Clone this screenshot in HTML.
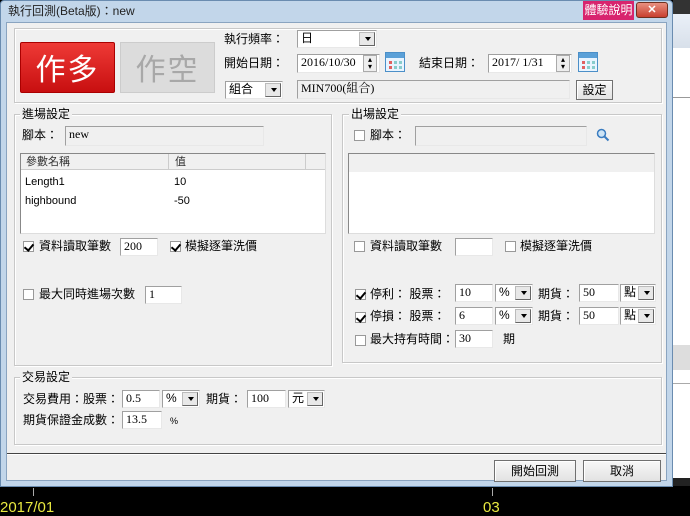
<!DOCTYPE html>
<html><head><meta charset="utf-8"><style>
*{box-sizing:border-box;margin:0;padding:0}
body{width:690px;height:508px;overflow:hidden;background:#000;position:relative;font-family:"Liberation Sans","Noto Sans CJK TC",sans-serif;font-size:12px;color:#000}
.a{position:absolute;white-space:nowrap;line-height:14px}
.box{position:absolute;border:1px solid #c8c8c8;box-shadow:inset 1px 1px 0 #fff, 1px 1px 0 #fff}
.in{position:absolute;background:#fff;border:1px solid #a0a0a0;border-right-color:#e8e8e8;border-bottom-color:#e8e8e8;font-family:"Liberation Serif","Noto Serif CJK SC",serif;font-size:12px;line-height:15px;padding-left:3px}
.dd{position:absolute;background:#fff;border:1px solid #a0a0a0;border-right-color:#e8e8e8;border-bottom-color:#e8e8e8;padding-left:3px;line-height:15px}
.dd:after{content:"";position:absolute;right:1px;top:1px;width:14px;bottom:1px;background:#e8e8e8;border:1px solid #bbb;border-right-color:#666;border-bottom-color:#666}
.dd:before{content:"";position:absolute;right:5px;top:6px;border:3px solid transparent;border-top:4px solid #000;z-index:2}
.cb{position:absolute;width:11px;height:11px;border:1px solid #999;background:#fff}
.cb.on:after{content:"";position:absolute;left:2px;top:0px;width:4px;height:7px;border:solid #000;border-width:0 2px 2px 0;transform:rotate(40deg)}
.btn{position:absolute;background:linear-gradient(#f8f8f8,#e2e2e2);border:1px solid #707070;box-shadow:inset 1px 1px 0 #fff;text-align:center}
.cal{position:absolute;width:20px;height:20px;border:1px solid #4b8fc8;background:#e8f4ff}
.cal:before{content:"";position:absolute;left:0;right:0;top:0;height:5px;background:#5aa0d8}
.cal:after{content:"";position:absolute;left:3px;top:8px;width:3px;height:3px;background:#e06060;box-shadow:5px 0 #8cc,10px 0 #8cc,0 5px #e06060,5px 5px #8cc,10px 5px #8cc}
.sp{position:absolute;width:14px;height:17px;background:#eee;border:1px solid #aaa;font-size:8px;line-height:7px;text-align:center}
</style></head><body>
<div style="position:absolute;left:673px;top:0;width:17px;height:14px;background:#333"></div>
<div style="position:absolute;left:673px;top:14px;width:17px;height:34px;background:linear-gradient(#eaf0f8,#d8e0ea)"></div>
<div style="position:absolute;left:673px;top:48px;width:17px;height:432px;background:#fff"></div>
<div style="position:absolute;left:673px;top:97px;width:17px;height:1px;background:#999"></div>
<div style="position:absolute;left:673px;top:345px;width:17px;height:25px;background:#ddd"></div>
<div style="position:absolute;left:673px;top:383px;width:17px;height:1px;background:#aaa"></div>
<div style="position:absolute;left:673px;top:478px;width:17px;height:8px;background:#222"></div>
<div class="a" style="left:0;top:500px;color:#e8e840;font-size:15px;line-height:16px">2017/01</div>
<div class="a" style="left:483px;top:500px;color:#e8e840;font-size:15px;line-height:16px">03</div>
<div style="position:absolute;left:33px;top:488px;width:1px;height:8px;background:#aaa"></div>
<div style="position:absolute;left:492px;top:488px;width:1px;height:8px;background:#aaa"></div>
<div style="position:absolute;left:0;top:0;width:673px;height:487px;background:#c2d6ea;border:1px solid #6a8cb0;border-radius:4px 4px 0 0"></div>
<div class="a" style="left:8px;top:4px;font-size:12px;color:#222">執行回測(Beta版)：new</div>
<div style="position:absolute;left:583px;top:1px;width:51px;height:19px;background:#d8246e;color:#fff;text-align:center;line-height:19px;font-size:12px">體驗說明</div>
<div style="position:absolute;left:636px;top:2px;width:32px;height:16px;background:linear-gradient(#e89080,#c84030);border:1px solid #703020;border-radius:3px;color:#fff;text-align:center;line-height:14px;font-size:11px;font-weight:bold">✕</div>
<div style="position:absolute;left:6px;top:22px;width:661px;height:459px;background:#f0f0f0;border:1px solid #8aa4c0"></div>
<div class="box" style="left:14px;top:28px;width:648px;height:75px"></div>
<div style="position:absolute;left:20px;top:42px;width:95px;height:51px;background:linear-gradient(#ee3a36,#c80f10);border:1px solid #a00;border-radius:2px;color:#fff;font-size:30px;text-align:center;line-height:49px;font-family:'Noto Sans CJK TC',sans-serif;letter-spacing:2px">作多</div>
<div style="position:absolute;left:120px;top:42px;width:95px;height:51px;background:#dcdcdc;border:1px solid #ccc;color:#a8a8a8;font-size:30px;text-align:center;line-height:49px;font-family:'Noto Sans CJK TC',sans-serif;letter-spacing:2px">作空</div>
<div class="a" style="left:224px;top:32px">執行頻率：</div>
<div class="dd" style="left:297px;top:30px;width:80px;height:18px">日</div>
<div class="a" style="left:224px;top:56px">開始日期：</div>
<div class="in" style="left:297px;top:54px;width:83px;height:19px">2016/10/30</div>
<div class="sp" style="left:363px;top:55px">▴<br>▾</div>
<div class="cal" style="left:385px;top:52px"></div>
<div class="a" style="left:419px;top:56px">結束日期：</div>
<div class="in" style="left:488px;top:54px;width:84px;height:19px">2017/ 1/31</div>
<div class="sp" style="left:556px;top:55px">▴<br>▾</div>
<div class="cal" style="left:578px;top:52px"></div>
<div class="dd" style="left:225px;top:81px;width:58px;height:18px">組合</div>
<div class="in" style="left:297px;top:80px;width:273px;height:19px;background:#f0f0f0">MIN700(組合)</div>
<div class="btn" style="left:576px;top:80px;width:37px;height:20px;line-height:18px">設定</div>
<div class="box" style="left:14px;top:114px;width:318px;height:252px"></div>
<div class="a" style="left:20px;top:107px;background:#f0f0f0;padding:0 2px">進場設定</div>
<div class="a" style="left:22px;top:128px">腳本：</div>
<div class="in" style="left:65px;top:126px;width:199px;height:20px;background:#f0f0f0">new</div>
<div style="position:absolute;left:20px;top:153px;width:306px;height:81px;background:#fff;border:1px solid #888;border-right-color:#ddd;border-bottom-color:#ddd"></div>
<div style="position:absolute;left:21px;top:154px;width:304px;height:16px;background:#f0f0f0;border-bottom:1px solid #ccc"></div>
<div style="position:absolute;left:168px;top:154px;width:1px;height:16px;background:#ccc"></div>
<div style="position:absolute;left:305px;top:154px;width:1px;height:16px;background:#ccc"></div>
<div class="a" style="left:26px;top:155px;font-size:11px;color:#333">參數名稱</div>
<div class="a" style="left:175px;top:155px;font-size:11px;color:#333">值</div>
<div class="a" style="left:25px;top:175px;font-size:11px">Length1</div>
<div class="a" style="left:174px;top:175px;font-size:11px">10</div>
<div class="a" style="left:25px;top:194px;font-size:11px">highbound</div>
<div class="a" style="left:174px;top:194px;font-size:11px">-50</div>
<div class="cb on" style="left:23px;top:241px"></div>
<div class="a" style="left:39px;top:239px">資料讀取筆數</div>
<div class="in" style="left:120px;top:238px;width:38px;height:18px">200</div>
<div class="cb on" style="left:170px;top:241px"></div>
<div class="a" style="left:185px;top:239px">模擬逐筆洗價</div>
<div class="cb" style="left:23px;top:289px"></div>
<div class="a" style="left:39px;top:287px">最大同時進場次數</div>
<div class="in" style="left:145px;top:286px;width:37px;height:18px">1</div>
<div class="box" style="left:342px;top:114px;width:320px;height:249px"></div>
<div class="a" style="left:349px;top:107px;background:#f0f0f0;padding:0 2px">出場設定</div>
<div class="cb" style="left:354px;top:130px"></div>
<div class="a" style="left:370px;top:128px">腳本：</div>
<div class="in" style="left:415px;top:126px;width:172px;height:20px;background:#f0f0f0"></div>
<svg style="position:absolute;left:596px;top:128px" width="14" height="14"><circle cx="5.5" cy="5.5" r="4" fill="#cde4f6" stroke="#3a7cc0" stroke-width="1.5"/><line x1="8.5" y1="8.5" x2="12.5" y2="12.5" stroke="#3a7cc0" stroke-width="2"/></svg>
<div style="position:absolute;left:348px;top:153px;width:307px;height:81px;background:#fff;border:1px solid #888;border-right-color:#ddd;border-bottom-color:#ddd"></div>
<div style="position:absolute;left:349px;top:154px;width:305px;height:18px;background:#f0f0f0"></div>
<div class="cb" style="left:354px;top:241px"></div>
<div class="a" style="left:370px;top:239px">資料讀取筆數</div>
<div class="in" style="left:455px;top:238px;width:38px;height:18px"></div>
<div class="cb" style="left:505px;top:241px"></div>
<div class="a" style="left:520px;top:239px">模擬逐筆洗價</div>
<div class="cb on" style="left:355px;top:289px"></div>
<div class="a" style="left:370px;top:287px">停利： 股票：</div>
<div class="in" style="left:455px;top:284px;width:38px;height:18px">10</div>
<div class="dd" style="left:495px;top:284px;width:38px;height:18px">%</div>
<div class="a" style="left:538px;top:287px">期貨：</div>
<div class="in" style="left:579px;top:284px;width:40px;height:18px">50</div>
<div class="dd" style="left:620px;top:284px;width:36px;height:18px">點</div>
<div class="cb on" style="left:355px;top:312px"></div>
<div class="a" style="left:370px;top:309px">停損： 股票：</div>
<div class="in" style="left:455px;top:307px;width:38px;height:18px">6</div>
<div class="dd" style="left:495px;top:307px;width:38px;height:18px">%</div>
<div class="a" style="left:538px;top:309px">期貨：</div>
<div class="in" style="left:579px;top:307px;width:40px;height:18px">50</div>
<div class="dd" style="left:620px;top:307px;width:36px;height:18px">點</div>
<div class="cb" style="left:355px;top:335px"></div>
<div class="a" style="left:370px;top:332px">最大持有時間：</div>
<div class="in" style="left:455px;top:330px;width:38px;height:18px">30</div>
<div class="a" style="left:503px;top:332px">期</div>
<div class="box" style="left:14px;top:377px;width:648px;height:68px"></div>
<div class="a" style="left:20px;top:370px;background:#f0f0f0;padding:0 2px">交易設定</div>
<div class="a" style="left:23px;top:392px">交易費用：股票：</div>
<div class="in" style="left:122px;top:390px;width:38px;height:18px">0.5</div>
<div class="dd" style="left:162px;top:390px;width:38px;height:18px">%</div>
<div class="a" style="left:206px;top:392px">期貨：</div>
<div class="in" style="left:247px;top:390px;width:39px;height:18px">100</div>
<div class="dd" style="left:288px;top:390px;width:37px;height:18px">元</div>
<div class="a" style="left:23px;top:413px">期貨保證金成數：</div>
<div class="in" style="left:122px;top:411px;width:40px;height:18px">13.5</div>
<div class="a" style="left:170px;top:414px;font-size:9px">%</div>
<div style="position:absolute;left:7px;top:453px;width:659px;height:1px;background:#444"></div>
<div style="position:absolute;left:7px;top:454px;width:659px;height:1px;background:#fff"></div>
<div class="btn" style="left:494px;top:460px;width:82px;height:22px;line-height:20px">開始回測</div>
<div class="btn" style="left:583px;top:460px;width:78px;height:22px;line-height:20px">取消</div>
</body></html>
